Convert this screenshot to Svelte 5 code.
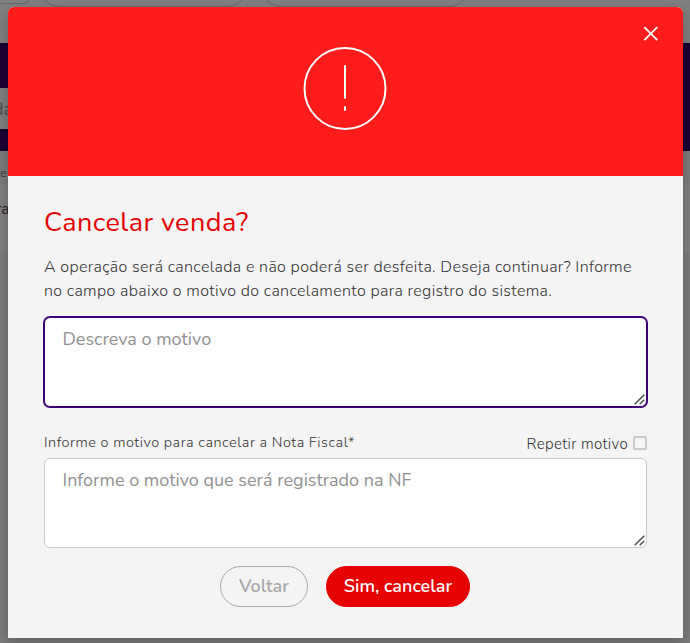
<script>
	let open = true;
	let motivo = '';
	let motivoNota = '';
	let repetir = false;

	$: if (repetir) motivoNota = motivo;

	const close = () => {
		open = false;
	}
</script>

<style>
	:global(body) {
		background: #7c7c7c;
		overflow: hidden;
	}
	.page {
		height: 643px;
		font-family: Nunito, Lato, "Open Sans", sans-serif;
		color: #333;
	}
	.filters {
		box-sizing: border-box;
		display: flex;
		gap: 17px;
		height: 43px;
		background: #808080;
		overflow: hidden;
	}
	.filter {
		box-sizing: border-box;
		width: 208px;
		height: 40px;
		margin-top: -33px;
		border: 1px solid #696969;
		border-radius: 20px;
	}
	.filter.first {
		width: 29px;
		height: 37px;
		border-left: 0;
		border-radius: 0 6px 6px 0;
		margin-right: -7px;
	}
	.filter:last-child {
		margin-left: -3px;
	}
	.band {
		box-sizing: border-box;
		height: 108px;
		padding: 45px 15px 22px 0;
		background: #1a0033;
	}
	.tab {
		height: 41px;
		background: #808080;
		font-size: 18px;
		line-height: 42px;
		color: #505050;
	}
	.tab span, .head span, .row span {
		display: inline-block;
		margin-left: -4px;
	}
	.tab span {
		margin-left: -7px;
	}
	.head {
		height: 34px;
		background: #7d7d7d;
		font-size: 12px;
		line-height: 44px;
	}
	.row {
		height: 67px;
		background: #808080;
		font-size: 15px;
		line-height: 48px;
		color: #222;
	}
	.modal {
		position: absolute;
		top: 7px;
		left: 8px;
		width: 675px;
		height: 631px;
		background: #f4f4f4;
		border-radius: 6px 6px 0 0;
		box-shadow: 0 5px 15px rgba(0, 0, 0, .25);
		font-family: Nunito, Lato, "Open Sans", sans-serif;
		color: #333;
		overflow: hidden;
	}
	header {
		box-sizing: border-box;
		display: flex;
		justify-content: center;
		height: 169px;
		padding-right: 1px;
		background: #ff1c1a;
	}
	.alert {
		width: 84px;
		height: 84px;
		margin-top: 39px;
	}
	.close {
		position: absolute;
		top: 19px;
		right: 24px;
		display: flex;
		padding: 0;
		border: 0;
		background: none;
		cursor: pointer;
	}
	.content {
		padding: 28px 36px 0;
	}
	h2 {
		margin: 0;
		font-size: 27px;
		font-weight: 400;
		line-height: 38px;
		letter-spacing: .45px;
		color: #e60000;
	}
	p {
		margin: 13px 0 14px;
		font-size: 16px;
		font-weight: 300;
		line-height: 24px;
		letter-spacing: .35px;
		white-space: nowrap;
	}
	.field {
		position: relative;
		width: 603px;
	}
	.field svg {
		position: absolute;
		right: 2px;
		bottom: 2px;
		pointer-events: none;
	}
	textarea {
		box-sizing: border-box;
		display: block;
		width: 603px;
		height: 90px;
		padding: 8px 17.5px;
		border: 1px solid #c8c8c8;
		border-radius: 6px;
		outline: none;
		resize: none;
		background: #fff;
		font-family: inherit;
		font-size: 18px;
		line-height: 26px;
		color: #333;
	}
	textarea.active {
		border-color: #3b0073;
		box-shadow: 0 0 0 1px #3b0073;
	}
	textarea::placeholder {
		color: #919191;
		opacity: 1;
	}
	.labels {
		display: flex;
		justify-content: space-between;
		align-items: flex-end;
		height: 51px;
		font-size: 14.5px;
		font-weight: 300;
	}
	.labels label {
		line-height: 20px;
		letter-spacing: .5px;
		padding-bottom: 6px;
	}
	.labels .repeat {
		display: flex;
		align-items: flex-end;
		gap: 5px;
		padding-bottom: 4px;
		font-size: 15px;
		letter-spacing: .35px;
	}
	input {
		appearance: none;
		box-sizing: border-box;
		width: 14px;
		height: 14px;
		margin: 0 0 4px;
		border: 2px solid #c9c9c9;
		border-radius: 2px;
	}
	input:checked {
		background: #3b0073;
	}
	.actions {
		display: flex;
		justify-content: center;
		gap: 18px;
		padding: 18px 1px 0 0;
	}
	.btn {
		box-sizing: border-box;
		width: 88px;
		height: 41px;
		padding: 0 0 1px;
		border: 1px solid #a8a8a8;
		border-radius: 21px;
		background: none;
		font-family: inherit;
		font-size: 18px;
		font-weight: 600;
		color: #a8a8a8;
		cursor: pointer;
	}
	.btn.confirm {
		width: 144px;
		border-color: #e60000;
		background: #e60000;
		color: #fff;
	}
</style>

<div class="page">
	<div class="filters">
		<div class="filter first"></div>
		<div class="filter"></div>
		<div class="filter"></div>
	</div>
	<div class="band">
		<div class="tab"><span>da</span></div>
	</div>
	<div class="head"><span>te</span></div>
	<div class="row"><span>ra</span></div>
</div>

{#if open}
	<div class="modal" role="dialog" aria-modal="true" aria-labelledby="title">
		<header>
			<svg class="alert" viewBox="0 0 84 84" fill="none" stroke="#fff">
				<circle cx="42" cy="42.5" r="40.5" stroke-width="2" />
				<path d="M42 20v32M42 61v3" stroke-width="2" stroke-linecap="round" />
			</svg>
			<button class="close" aria-label="Fechar" on:click={close}>
				<svg width="16" height="16" viewBox="0 0 16 16" stroke="#fff" stroke-width="1.8">
					<path d="M1.3 1.2l13 13M14.3 1.2l-13 13" />
				</svg>
			</button>
		</header>

		<div class="content">
			<h2 id="title">Cancelar venda?</h2>
			<p>A operação será cancelada e não poderá ser desfeita. Deseja continuar? Informe<br>no campo abaixo o motivo do cancelamento para registro do sistema.</p>
			<div class="field">
				<textarea class="active" placeholder="Descreva o motivo" bind:value={motivo}></textarea>
				<svg width="11" height="11" viewBox="0 0 11 11" stroke="#4a4a4a" stroke-width="1.5">
					<path d="M.7 10.2l9.6-9.4M5.7 10.2l4.6-4.4" />
				</svg>
			</div>

			<div class="labels">
				<label for="nota">Informe o motivo para cancelar a Nota Fiscal*</label>
				<label class="repeat">Repetir motivo <input type="checkbox" bind:checked={repetir}></label>
			</div>
			<div class="field">
				<textarea id="nota" placeholder="Informe o motivo que será registrado na NF" bind:value={motivoNota}></textarea>
				<svg width="11" height="11" viewBox="0 0 11 11" stroke="#4a4a4a" stroke-width="1.5">
					<path d="M.7 10.2l9.6-9.4M5.7 10.2l4.6-4.4" />
				</svg>
			</div>

			<div class="actions">
				<button class="btn" on:click={close}>Voltar</button>
				<button class="btn confirm" on:click={close}>Sim, cancelar</button>
			</div>
		</div>
	</div>
{/if}
